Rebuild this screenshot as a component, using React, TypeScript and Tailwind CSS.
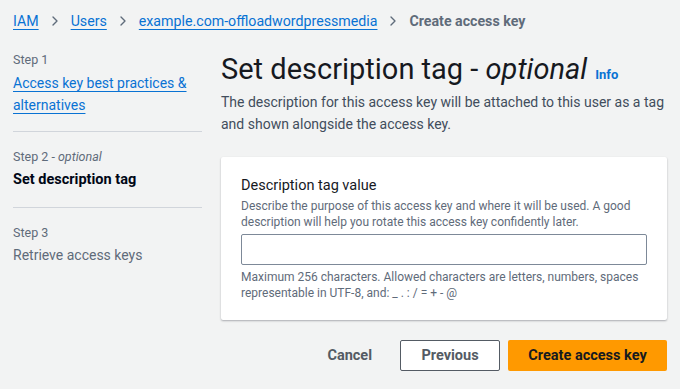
import { ChevronRight } from 'lucide-react';

const LINK = 'text-[#0972d3] underline underline-offset-[3px] decoration-1';

function Crumb({ label }: { label: string }) {
  return (
    <>
      <a className={LINK}>{label}</a>
      <ChevronRight className="mx-[8px] h-[16px] w-[16px] text-[#5f6b7a]" strokeWidth={2} />
    </>
  );
}

export default function App() {
  return (
    <div className="h-[389px] w-[680px] overflow-hidden bg-[#f2f3f3] text-[#000716]" style={{ fontFamily: 'Roboto, "Open Sans", sans-serif' }}>
      <nav className="flex items-center px-[13px] pt-[9px] text-[14.2px] leading-[24px]">
        <Crumb label="IAM" />
        <Crumb label="Users" />
        <Crumb label="example.com-offloadwordpressmedia" />
        <span className="font-bold text-[#5f6b7a]">Create access key</span>
      </nav>

      <div className="mt-[18px] flex gap-[19px] px-[13px]">
        <aside className="w-[189px] shrink-0">
          <div className="text-[12.5px] leading-[18px] text-[#5f6b7a]">Step 1</div>
          <a className={`${LINK} mt-[3px] block text-[14px] leading-[22px]`}>Access key best practices &amp; alternatives</a>
          <div className="mt-[15px] border-t border-[#d1d5db]" />

          <div className="mt-[16px] text-[12.5px] leading-[18px] text-[#5f6b7a]">
            Step 2 - <i>optional</i>
          </div>
          <div className="mt-[3px] text-[14.5px] font-bold leading-[22px]">Set description tag</div>
          <div className="mt-[16px] border-t border-[#d1d5db]" />

          <div className="mt-[16px] text-[12.5px] leading-[18px] text-[#5f6b7a]">Step 3</div>
          <div className="mt-[2px] text-[14px] leading-[22px] text-[#5f6b7a]">Retrieve access keys</div>
        </aside>

        <main className="w-[446px]">
          <div className="flex items-baseline">
            <h1 className="text-[29px] leading-[36px] font-normal text-[#16191f]">
              Set description tag - <i>optional</i>
            </h1>
            <a className="ml-[8px] text-[13px] font-bold text-[#0972d3]">Info</a>
          </div>
          <p className="mt-[4px] w-[452px] text-[14px] leading-[22px] text-[#414d5c]">
            The description for this access key will be attached to this user as a tag and shown alongside the access key.
          </p>

          <section className="mt-[22px] rounded-[2px] bg-white px-[20px] pb-[19px] pt-[19px] shadow-[0_1px_2px_rgba(0,7,22,0.3)]">
            <label className="block text-[14.5px] leading-[20px] text-[#16191f]">Description tag value</label>
            <div className="mt-[2px] text-[12px] leading-[16px] text-[#5f6b7a]">
              Describe the purpose of this access key and where it will be used. A good description will help you rotate this access key confidently later.
            </div>
            <input className="mt-[4px] block h-[31px] w-full rounded-[2px] border border-[#7d8998] bg-white px-[8px]" />
            <div className="mt-[4px] text-[12px] leading-[16px] text-[#5f6b7a]">
              Maximum 256 characters. Allowed characters are letters, numbers, spaces representable in UTF-8, and: _ . : / = + - @
            </div>
          </section>

          <div className="mt-[20px] flex items-center justify-end gap-[8px]">
            <button className="px-[20px] text-[14.5px] font-bold text-[#545b64]">Cancel</button>
            <button className="h-[31px] w-[100px] rounded-[2px] border border-[#545b64] bg-white text-[14.5px] font-bold text-[#545b64]">Previous</button>
            <button className="h-[31px] w-[159px] rounded-[2px] bg-[#ff9900] text-[14.5px] font-bold text-[#16191f]">Create access key</button>
          </div>
        </main>
      </div>
    </div>
  );
}
